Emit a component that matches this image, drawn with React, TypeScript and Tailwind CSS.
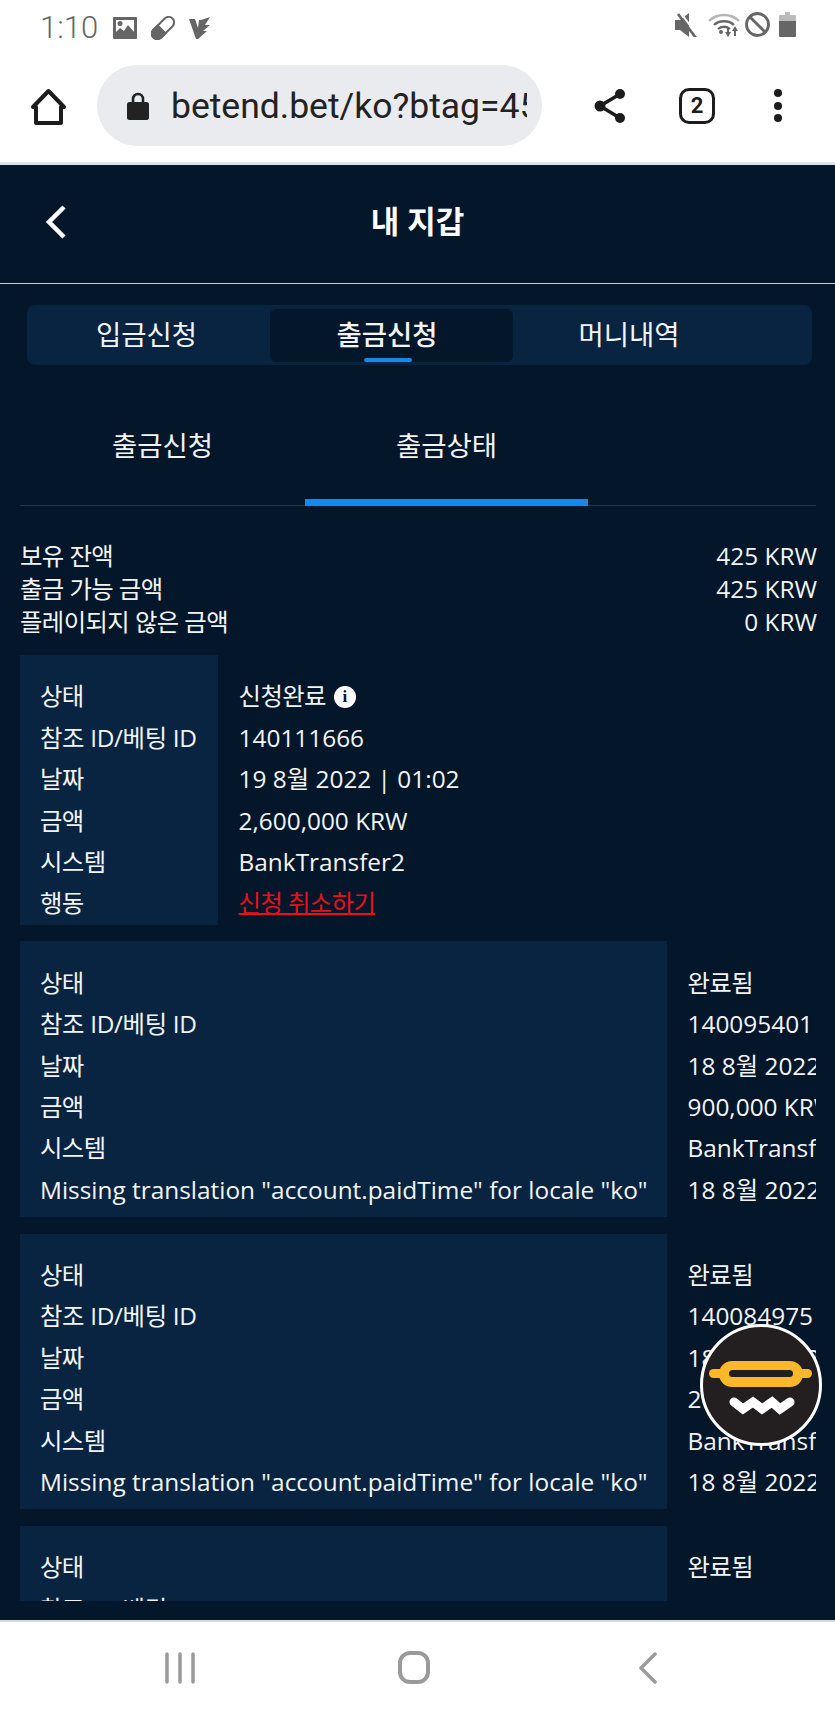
const rows2 = [
  ["상태", "완료됨"],
  ["참조 ID/베팅 ID", "140095401"],
  ["날짜", "18 8월 2022 | 12:11"],
  ["금액", "900,000 KRW"],
  ["시스템", "BankTransfer2"],
  ['Missing translation "account.paidTime" for locale "ko"', "18 8월 2022 | 12:40"],
];

const rows3 = [
  ["상태", "완료됨"],
  ["참조 ID/베팅 ID", "140084975"],
  ["날짜", "18 8월 2022 | 08:25"],
  ["금액", "200,000 KRW"],
  ["시스템", "BankTransfer2"],
  ['Missing translation "account.paidTime" for locale "ko"', "18 8월 2022 | 08:52"],
];

function Row({ children }: { children: React.ReactNode }) {
  return <div className="flex h-[41.4px] items-center whitespace-nowrap">{children}</div>;
}

// Korean runs sit a little tighter than the latin text in the picture
function Ko({ children }: { children: React.ReactNode }) {
  return <span className="tracking-[-0.6px]">{children}</span>;
}

function DetailTable({ rows }: { rows: string[][] }) {
  return (
    <div className="mb-[17px] flex shrink-0 text-[24.4px] text-[#f2f4f6]">
      <div className="shrink-0 bg-[#092440] pb-[6px] pl-[20px] pr-[19px] pt-[21px]">
        <Row><Ko>{rows[0][0]}</Ko></Row>
        <Row><span className="tracking-[-0.35px]">{rows[1][0]}</span></Row>
        <Row><Ko>{rows[2][0]}</Ko></Row>
        <Row><Ko>{rows[3][0]}</Ko></Row>
        <Row><Ko>{rows[4][0]}</Ko></Row>
        <Row>{rows[5][0]}</Row>
      </div>
      <div className="shrink-0 pl-[21px] pt-[21px]">
        <Row><Ko>{rows[0][1]}</Ko></Row>
        {rows.slice(1).map((r) => (
          <Row key={r[0]}>{r[1]}</Row>
        ))}
      </div>
    </div>
  );
}

function StatusLeft() {
  return (
    <div className="flex items-center">
      <span className="mr-[15px] font-['Roboto',sans-serif] text-[31px] font-light leading-none text-[#666]">1:10</span>
      <svg className="mr-[14px]" width="24" height="22" viewBox="0 0 24 22">
        <path fill="#666" fillRule="evenodd" d="M1 0h22a1 1 0 0 1 1 1v20a1 1 0 0 1-1 1H1a1 1 0 0 1-1-1V1a1 1 0 0 1 1-1Zm2 3v12l4-4 4 3 4-6 6 7V3H3Zm4 1a2.500 2.500 0 1 1 0 5 2.500 2.500 0 0 1 0-5Z" />
      </svg>
      <svg className="mr-[14px]" width="24" height="24" viewBox="0 0 24 24">
        <g transform="rotate(-45 12 12)">
          <rect x="-1.500" y="6.500" width="27" height="11" rx="5.500" fill="#fff" stroke="#666" strokeWidth="2" />
          <path fill="#666" d="M11 5.500H4a6.500 6.500 0 0 0 0 13h7Z" />
        </g>
      </svg>
      <svg width="22" height="22" viewBox="0 0 22 22">
        <path fill="#666" d="M0 2h6l3 9 1-8h2l9-3-5 8h5l-7 6h4l-9 8H7Z" />
      </svg>
    </div>
  );
}

function StatusRight() {
  return (
    <div className="flex items-center">
      <svg className="mr-[10px]" width="23" height="24" viewBox="0 0 23 24">
        <path fill="#666" d="M0 7h5l9-7v24l-9-7H0Z" />
        <path stroke="#fff" strokeWidth="2" d="M5 -1 23 23" />
        <path stroke="#666" strokeWidth="2.600" d="M3 1 21 25" />
      </svg>
      <svg className="mr-[5px]" width="32" height="24" viewBox="0 0 32 24">
        <g fill="none" strokeWidth="2.400">
          <path stroke="#b5b5b5" d="M1 8c8-8 22-8 30 0" />
          <path stroke="#666" d="M6 12c5-5 15-5 20 0" />
          <path stroke="#666" d="M10 16c3-3 9-3 12 0" />
        </g>
        <circle cx="13" cy="19" r="2" fill="#666" />
        <path stroke="#666" strokeWidth="2" d="M20 15v8M27 23v-8" />
        <path fill="#666" d="m17 19 3 5 3-5ZM24 18l3-5 3 5Z" />
      </svg>
      <svg className="mr-[9px]" width="25" height="25" viewBox="0 0 25 25" fill="none" stroke="#666" strokeWidth="2.800">
        <circle cx="12.500" cy="12.500" r="11" />
        <path d="M5 5l15 15" />
      </svg>
      <svg width="17" height="25" viewBox="0 0 17 25">
        <path fill="#bbb" d="M6 0h5v3h5a1 1 0 0 1 1 1v5H0V4a1 1 0 0 1 1-1h5Z" />
        <path fill="#666" d="M0 9h17v15a1 1 0 0 1-1 1H1a1 1 0 0 1-1-1Z" />
      </svg>
    </div>
  );
}

function BrowserBar() {
  return (
    <div className="flex h-[81px] items-center">
      <svg className="ml-[30px]" width="37" height="38" viewBox="0 0 37 38" fill="none" stroke="#1c1c1c" strokeWidth="4" strokeLinejoin="round">
        <path d="M6 36V20H3L18.500 4 34 20h-3v16Z" />
      </svg>
      <div className="ml-[30px] flex h-[81px] w-[445px] items-center rounded-[41px] bg-[#eaebef] pl-[30px] pr-[15px]">
        <svg className="shrink-0" width="22" height="28" viewBox="0 0 22 28">
          <path fill="none" stroke="#222" strokeWidth="2.600" d="M6 12V7a5 5 0 0 1 10 0v5" />
          <rect x="0" y="10" width="22" height="18" rx="2.500" fill="#222" />
        </svg>
        <span className="ml-[22px] overflow-hidden whitespace-nowrap font-['Roboto',sans-serif] text-[35.5px] leading-[44px] text-[#222]">
          betend.bet/ko?btag=45
        </span>
      </div>
      <svg className="ml-[52px]" width="32" height="36" viewBox="0 0 32 36">
        <path fill="none" stroke="#1c1c1c" strokeWidth="3.500" d="M26 6 6 18l20 12" />
        <circle cx="26" cy="6" r="5" fill="#1c1c1c" />
        <circle cx="6" cy="18" r="5.500" fill="#1c1c1c" />
        <circle cx="26" cy="30" r="5" fill="#1c1c1c" />
      </svg>
      <div className="ml-[53px] flex h-[36px] w-[36px] items-center justify-center rounded-[10px] border-[3.500px] border-[#1c1c1c] font-['Roboto',sans-serif] text-[22px] font-bold leading-none text-[#1c1c1c]">
        2
      </div>
      <div className="ml-[59px] flex flex-col gap-[4.500px]">
        <div className="h-[8px] w-[8px] rounded-full bg-[#1c1c1c]" />
        <div className="h-[8px] w-[8px] rounded-full bg-[#1c1c1c]" />
        <div className="h-[8px] w-[8px] rounded-full bg-[#1c1c1c]" />
      </div>
    </div>
  );
}

function FloatingButton() {
  return (
    <div className="absolute left-[700px] top-[1324px] h-[122px] w-[122px] rounded-full border-[3px] border-white bg-[#231f20]">
      <svg className="h-full w-full" viewBox="0 0 116 116">
        <rect x="6" y="42" width="103" height="9" rx="4.500" fill="#fbb829" />
        <rect x="16" y="34" width="84" height="26" rx="13" fill="#fbb829" />
        <rect x="26" y="43" width="64" height="7" rx="3.500" fill="#231f20" />
        <path fill="none" stroke="#fff" strokeWidth="9" strokeLinecap="round" strokeLinejoin="miter" d="M31 75l9 7 10-7 9 7 10-7 8 7 10-7" />
      </svg>
    </div>
  );
}

export default function App() {
  return (
    <div className="relative flex h-[1716px] w-[835px] flex-col overflow-hidden bg-white font-['Open_Sans','Noto_Sans_CJK_KR',sans-serif]">
      <div className="h-[165px] shrink-0 border-b-[3px] border-[#dfe2e6]">
        <div className="flex h-[65px] items-start justify-between pl-[40px] pr-[39px] pt-[12px]">
          <StatusLeft />
          <StatusRight />
        </div>
        <BrowserBar />
      </div>

      <div className="flex min-h-0 flex-1 flex-col bg-[#04162a] text-[#f2f4f6]">
        <div className="relative flex h-[119px] shrink-0 items-center justify-center border-b border-[#c9ced4] pb-[6px]">
          <svg className="absolute left-[45px] top-[40px]" width="22" height="34" viewBox="0 0 22 34" fill="none" stroke="#fff" strokeWidth="4.500">
            <path d="M19 2 4 17l15 15" />
          </svg>
          <span className="text-[31px] font-bold leading-none text-white">내 지갑</span>
        </div>

        <div className="ml-[27px] mr-[23px] mt-[21px] flex h-[60px] shrink-0 items-center rounded-[8px] bg-[#092440] px-[3px] text-[27.5px] leading-none">
          <div className="flex h-[53px] w-[240px] items-center justify-center pr-[7px]">입금신청</div>
          <div className="relative flex h-[53px] w-[243px] items-center justify-center rounded-[6px] bg-[#04162a] pr-[9px] font-medium">
            출금신청
            <div className="absolute bottom-0 left-[94px] h-[4px] w-[48px] rounded-full bg-[#1588ee]" />
          </div>
          <div className="flex h-[53px] w-[292px] items-center justify-center pr-[60px]">머니내역</div>
        </div>

        <div className="ml-[20px] mr-[19px] mt-[34px] flex h-[107px] shrink-0 items-stretch border-b border-[#25354a] text-[27.5px] leading-none">
          <div className="flex w-[285px] items-center justify-center pb-[13px]">출금신청</div>
          <div className="-mb-px flex w-[283px] items-center justify-center border-b-[7px] border-[#1588ee] pb-[7px]">출금상태</div>
        </div>

        <div className="ml-[20px] mr-[18px] mt-[34px] shrink-0 text-[24.4px]">
          <div className="flex h-[33px] items-center justify-between"><Ko>보유 잔액</Ko><span>425 KRW</span></div>
          <div className="flex h-[33px] items-center justify-between"><Ko>출금 가능 금액</Ko><span>425 KRW</span></div>
          <div className="flex h-[33px] items-center justify-between"><Ko>플레이되지 않은 금액</Ko><span>0 KRW</span></div>
        </div>

        <div className="mb-[19px] ml-[20px] mr-[19px] mt-[16px] min-h-0 flex-1 overflow-hidden">
          <div className="mb-[16px] flex shrink-0 text-[24.4px]">
            <div className="shrink-0 bg-[#092440] pb-[1px] pl-[20px] pr-[21px] pt-[21px]">
              <Row><Ko>상태</Ko></Row>
              <Row><span className="tracking-[-0.35px]">참조 ID/베팅 ID</span></Row>
              <Row><Ko>날짜</Ko></Row>
              <Row><Ko>금액</Ko></Row>
              <Row><Ko>시스템</Ko></Row>
              <Row><Ko>행동</Ko></Row>
            </div>
            <div className="shrink-0 pl-[21px] pt-[21px]">
              <Row>
                <Ko>신청완료</Ko>
                <span className="ml-[8px] flex h-[22px] w-[22px] items-center justify-center rounded-full bg-white font-['Liberation_Serif',serif] text-[17px] font-bold leading-none text-[#04162a]">i</span>
              </Row>
              <Row>140111666</Row>
              <Row>19 8월 2022 | 01:02</Row>
              <Row>2,600,000 KRW</Row>
              <Row>BankTransfer2</Row>
              <Row><span className="tracking-[-0.6px] text-[#e8101c] underline decoration-2">신청 취소하기</span></Row>
            </div>
          </div>
          <DetailTable rows={rows2} />
          <DetailTable rows={rows3} />
          <DetailTable rows={rows2} />
        </div>
      </div>

      <div className="flex h-[96px] shrink-0 items-center border-t-[2px] border-[#d5dbe3] bg-white pb-[3px] pl-[165px]">
        <svg width="30" height="32" viewBox="0 0 30 32" stroke="#9a9a9a" strokeWidth="3.500" strokeLinecap="round">
          <path d="M2 2v28M15 2v28M28 2v28" />
        </svg>
        <svg className="ml-[203px]" width="32" height="33" viewBox="0 0 32 33" fill="none" stroke="#9a9a9a" strokeWidth="4">
          <rect x="2" y="2" width="28" height="29" rx="10" />
        </svg>
        <svg className="ml-[208px]" width="20" height="32" viewBox="0 0 20 32" fill="none" stroke="#9a9a9a" strokeWidth="3.500" strokeLinecap="round" strokeLinejoin="round">
          <path d="M17 2 3 16l14 14" />
        </svg>
      </div>

      <FloatingButton />
    </div>
  );
}
